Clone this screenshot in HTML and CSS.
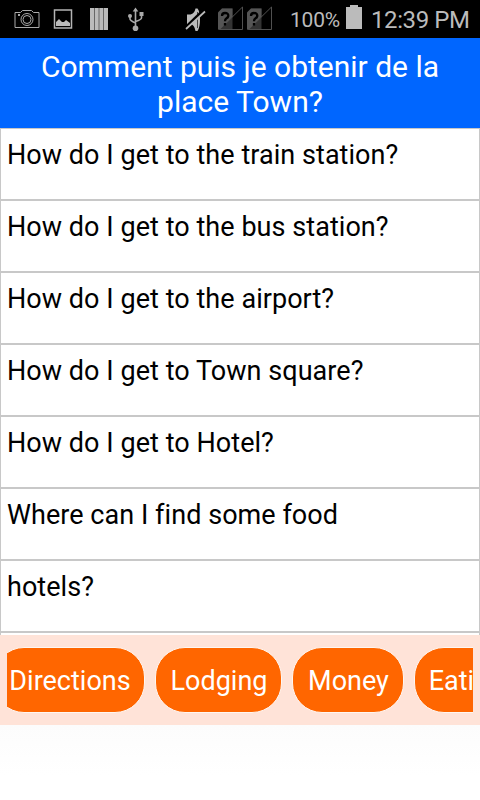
FILE: index.html
```
<!DOCTYPE html>
<html lang="en">
<head>
	<meta charset="utf-8"/>
	<title>Phrasebook</title>
	<meta name="viewport" content="width=device-width,initial-scale=1.0">
	<link rel="stylesheet" href="styles.css">
</head>

<body>
	<div class="statusbar">
		<svg class="icons" width="280" height="38" viewBox="0 0 280 38">
			<!-- camera -->
			<g fill="none" stroke="#aaa">
				<path d="M15 12.500h5.500l2-2h9l2 2H39v15H15z"/>
				<circle cx="27" cy="19.500" r="6"/>
				<circle cx="27" cy="19.500" r="4"/>
			</g>
			<path d="M18 14h2v2h-2z" fill="#aaa"/>
			<!-- picture -->
			<path d="M54.500 10h17v18h-17z" fill="none" stroke="#b4b4b4" stroke-width="1.500"/>
			<path d="M56 26v-4l3-3 3 3h2l2-2 4 3v3z" fill="#bbb"/>
			<!-- bars -->
			<path d="M90 8h18v22H90z" fill="#bbb"/>
			<path d="M94.500 8v22M99 8v22M103.500 8v22" stroke="#666"/>
			<!-- usb -->
			<g fill="none" stroke="#aaa" stroke-width="1.600">
				<path d="M135.500 28V10M130 16v3q0 1.500 5.500 4M141.500 14v4q0 1.500-6 3.500"/>
			</g>
			<path d="M135.500 7.500l2.800 4h-5.600zM139.500 12h4v4h-4z" fill="#aaa"/>
			<circle cx="130" cy="16" r="2" fill="#aaa"/>
			<circle cx="135.500" cy="28.300" r="2.800" fill="#aaa"/>
			<!-- muted speaker -->
			<path d="M187 14.500h3.500q4-1 5-6h2q2.500 3 2.500 11t-2.500 11.500h-2q-1-6-5-7H187z" fill="#bbb"/>
			<path d="M197.500 12v16" stroke="#444"/>
			<path d="M185 28.500L204 10" stroke="#000" stroke-width="3.500"/>
			<path d="M186 29L205 11.500" stroke="#bbb" stroke-width="1.700"/>
			<!-- unknown sims -->
			<g id="sim">
				<path d="M222 8.500h10.500v21H218V12.500z" fill="#333"/>
				<path d="M222 8.500h10.500V17L220 29.500h-2V12.500z" fill="#555"/>
				<path d="M219.500 29.500L242.500 7v22.500z" fill="none" stroke="#505050"/>
				<path d="M222 16q0-3 3-3 3.500 0 3.300 3-.2 1.500-2 2.500-1.300.8-1.300 2.700M225 23v2.500" fill="none" stroke="#000" stroke-width="2.300"/>
			</g>
			<use href="#sim" x="29"/>
		</svg>
		<span class="percent">100%</span>
		<svg class="battery" width="16" height="24" viewBox="0 0 16 24">
			<path d="M4 0h8v2h4v22H0V2h4z" fill="#bbb"/>
		</svg>
		<span class="clock">12:39 PM</span>
	</div>

	<h1 class="title">Comment puis je obtenir de la place Town?</h1>

	<ul class="phrases">
		<li>How do I get to the train station?</li>
		<li>How do I get to the bus station?</li>
		<li>How do I get to the airport?</li>
		<li>How do I get to Town square?</li>
		<li>How do I get to Hotel?</li>
		<li>Where can I find some food</li>
		<li>hotels?</li>
		<li></li>
	</ul>

	<div class="categories">
		<div class="scroller">
			<button class="first">Directions</button>
			<button class="lodging">Lodging</button>
			<button class="money">Money</button>
			<button class="eating">Eating</button>
		</div>
	</div>
</body>
</html>
```
FILE: styles.css
```
* {
	box-sizing: border-box;
}
body {
	margin: 0;
	height: 800px;
	overflow: hidden;
	background: linear-gradient(#fcfcfc 725px, #fff 775px);
	font-family: Roboto, "Liberation Sans", sans-serif;
	font-size: 27px;
}
.statusbar {
	display: flex;
	height: 38px;
	background: #000;
	color: #bbb;
	white-space: nowrap;
}
.icons, .battery {
	flex: none;
}
.percent {
	width: 56px;
	padding-left: 10px;
	margin-right: 10px;
	font-size: 21px;
	line-height: 40px;
	letter-spacing: -.2px;
}
.battery {
	margin-top: 5px;
}
.clock {
	margin-left: 9px;
	font-size: 24px;
	line-height: 40px;
	letter-spacing: -.4px;
}
.title {
	height: 90px;
	margin: 0;
	padding: 11px 30px 0;
	background: #06f;
	color: #fff;
	font-size: 30px;
	font-weight: 400;
	line-height: 35px;
	text-align: center;
}
.phrases {
	height: 507px;
	margin: 0;
	padding: 0;
	overflow: hidden;
	list-style: none;
	background: #fff;
	color: #000;
}
.phrases li {
	height: 72px;
	padding: 9px 6px;
	border: 1px solid #c8c8c8;
	line-height: 34px;
	letter-spacing: .05px;
}
.categories {
	height: 90px;
	padding: 12px 7px;
	background: #ffe3d8;
}
.scroller {
	display: flex;
	gap: 10px;
	overflow: hidden;
}
.scroller button {
	flex: none;
	height: 66px;
	padding: 2px 0 0 1px;
	border: 1px solid #fff6f0;
	border-radius: 30px;
	background: #f60;
	color: #fff;
	font: inherit;
}
.scroller .first {
	width: 151px;
	margin-left: -13px;
}
.scroller .lodging {
	width: 127px;
}
.scroller .money {
	width: 112px;
}
.scroller .eating {
	width: 104px;
}
```
